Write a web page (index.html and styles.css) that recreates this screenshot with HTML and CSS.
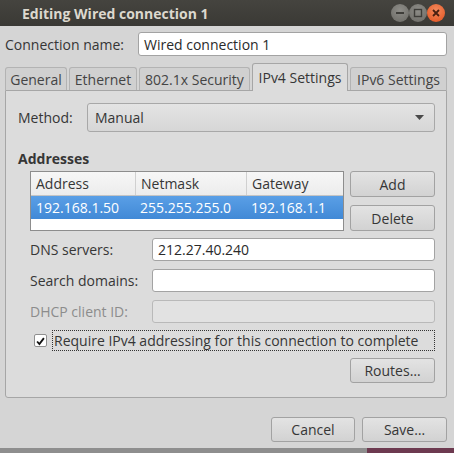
FILE: index.html
```html
<!DOCTYPE html>
<html lang="en">
<head>
  <meta charset="UTF-8" />
  <title>Editing Wired connection 1</title>
  <link rel="stylesheet" href="styles.css">
</head>
<body>
  <div class="window">
    <header class="titlebar">
      <span class="title">Editing Wired connection 1</span>
      <div class="wm-buttons">
        <span class="wm-btn wm-min"><svg width="18" height="18" viewBox="0 0 18 18"><rect x="5" y="8" width="8" height="2" fill="#3e3d39"/></svg></span>
        <span class="wm-btn wm-max"><svg width="18" height="18" viewBox="0 0 18 18"><rect x="5.5" y="5.5" width="7" height="7" fill="none" stroke="#3e3d39" stroke-width="1.4"/></svg></span>
        <span class="wm-btn wm-close"><svg width="18" height="18" viewBox="0 0 18 18"><path d="M6 6 L12 12 M12 6 L6 12" stroke="#4a1f10" stroke-width="1.8"/></svg></span>
      </div>
    </header>

    <div class="content">
      <div class="name-row">
        <label class="name-label">Connection name:</label>
        <div class="entry">Wired connection 1</div>
      </div>

      <!-- notebook tabs -->
      <div class="tabs">
        <div class="tab tab-general">General</div>
        <div class="tab tab-ethernet">Ethernet</div>
        <div class="tab tab-security">802.1x Security</div>
        <div class="tab tab-ipv4 active">IPv4 Settings</div>
        <div class="tab tab-ipv6">IPv6 Settings</div>
      </div>

      <div class="panel">
        <div class="method-row">
          <span class="method-label">Method:</span>
          <div class="combo">
            <span>Manual</span>
            <svg width="9" height="5" viewBox="0 0 9 5"><path d="M0 0 H9 L4.5 5 Z" fill="#4a4a4a"/></svg>
          </div>
        </div>

        <h4 class="section-title">Addresses</h4>

        <div class="addresses">
          <div class="table">
            <div class="t-row t-head">
              <span class="col col-addr">Address</span>
              <span class="col col-mask">Netmask</span>
              <span class="col col-gw">Gateway</span>
            </div>
            <div class="t-row t-selected">
              <span class="col col-addr">192.168.1.50</span>
              <span class="col col-mask">255.255.255.0</span>
              <span class="col col-gw">192.168.1.1</span>
            </div>
          </div>
          <div class="side-buttons">
            <button class="btn">Add</button>
            <button class="btn">Delete</button>
          </div>
        </div>

        <div class="fields">
          <div class="field">
            <span class="field-label">DNS servers:</span>
            <div class="entry">212.27.40.240</div>
          </div>
          <div class="field">
            <span class="field-label">Search domains:</span>
            <div class="entry"></div>
          </div>
          <div class="field disabled">
            <span class="field-label">DHCP client ID:</span>
            <div class="entry"></div>
          </div>
        </div>

        <div class="check-row">
          <span class="checkbox"><svg width="13" height="13" viewBox="0 0 13 13"><path d="M2.5 6.5 L5.2 9.5 L10.5 2.5" fill="none" stroke="#111" stroke-width="2.2"/></svg></span>
          <span class="check-label">Require IPv4 addressing for this connection to complete</span>
        </div>

        <div class="routes-row">
          <button class="btn">Routes…</button>
        </div>
      </div>

      <div class="actions">
        <button class="btn btn-cancel">Cancel</button>
        <button class="btn btn-save">Save…</button>
      </div>
    </div>
  </div>
  <div class="desktop">
    <div class="desktop-grey"></div>
    <div class="desktop-wall"></div>
  </div>
</body>
</html>
```

FILE: styles.css
```css
:root {
  --text: #363636;
  --bg: #d5d5d5;
  --panel: #dcdcdc;
  --border: #a6a6a6;
  --select: #4d94de;
}

* {
  box-sizing: border-box;
  margin: 0;
  padding: 0;
}

body {
  width: 454px;
  height: 453px;
  overflow: hidden;
  font-family: "Open Sans", sans-serif;
  font-size: 14px;
  color: var(--text);
  background: #8a8a8a;
}

.window {
  height: 448px;
  background: var(--bg);
  display: flex;
  flex-direction: column;
}

/* title bar */
.titlebar {
  height: 26px;
  background: linear-gradient(#45443f, #3a3935);
  display: flex;
  align-items: center;
  padding: 0 9px 0 22px;
}

.title {
  flex: 1;
  color: #dcd8ce;
  font-weight: bold;
  font-size: 14px;
}

.wm-buttons {
  display: flex;
}

.wm-btn {
  width: 18px;
  height: 18px;
  border-radius: 50%;
  display: flex;
  background: radial-gradient(circle at 50% 35%, #8e8d88, #6a6964);
}

.wm-close {
  background: radial-gradient(circle at 50% 35%, #f48a5c, #e0501e);
}

.content {
  flex: 1;
  padding: 6px 7px 0 5px;
  display: flex;
  flex-direction: column;
}

.name-row {
  display: flex;
  align-items: center;
}

.name-label {
  width: 133px;
}

.entry {
  flex: 1;
  height: 24px;
  background: #fff;
  border: 1px solid #a3a3a3;
  border-radius: 3px;
  padding: 0 5px;
  display: flex;
  align-items: center;
  color: #2a2a2a;
}

/* tabs */
.tabs {
  margin-top: 7px;
  height: 27px;
  display: flex;
  align-items: flex-end;
  gap: 2px;
  position: relative;
  z-index: 1;
}

.tab {
  height: 23px;
  border: 1px solid #b3b3b3;
  border-bottom: none;
  border-radius: 3px 3px 0 0;
  background: #d0d0d0;
  display: flex;
  align-items: center;
  justify-content: center;
  color: #444;
  white-space: nowrap;
}

.tab.active {
  height: 28px;
  margin-bottom: -1px;
  background: var(--panel);
  border-color: var(--border);
  color: var(--text);
}

.tab-general { width: 62px; }
.tab-ethernet { width: 68px; }
.tab-security { width: 111px; }
.tab-ipv4 { width: 96px; }
.tab-ipv6 { width: 97px; }

.panel {
  height: 308px;
  background: var(--panel);
  border: 1px solid var(--border);
  border-radius: 0 0 3px 3px;
  padding: 12px 11px 0 12px;
  display: flex;
  flex-direction: column;
}

.method-row {
  display: flex;
  align-items: center;
}

.method-label {
  width: 69px;
}

.combo {
  flex: 1;
  height: 29px;
  border: 1px solid #a8a8a8;
  border-radius: 3px;
  background: linear-gradient(#e4e4e4, #d6d6d6);
  display: flex;
  align-items: center;
  justify-content: space-between;
  padding: 0 10px 0 7px;
}

.section-title {
  margin-top: 17px;
  height: 19px;
  font-size: 14px;
  font-weight: bold;
}

.addresses {
  margin-top: 3px;
  padding-left: 12px;
  display: flex;
  gap: 6px;
}

.table {
  width: 314px;
  height: 60px;
  background: #fff;
  border: 1px solid #8d8d8d;
}

.t-row {
  display: flex;
  align-items: center;
}

.t-head {
  height: 24px;
  background: linear-gradient(#f7f7f7, #ececec);
  border-bottom: 1px solid #c4c4c4;
}

.t-head .col + .col {
  border-left: 1px solid #d0d0d0;
}

.t-selected {
  height: 23px;
  background: linear-gradient(#5a9fe6, #4189d6);
  color: #fff;
}

.col {
  height: 100%;
  display: flex;
  align-items: center;
  padding-left: 5px;
}

.col-addr { width: 104px; }
.col-mask { width: 111px; }
.col-gw { flex: 1; }

.side-buttons {
  display: flex;
  flex-direction: column;
  gap: 8px;
}

.btn {
  width: 85px;
  height: 26px;
  font: inherit;
  color: var(--text);
  border: 1px solid #a2a2a2;
  border-radius: 3px;
  background: linear-gradient(#e3e3e3, #d2d2d2);
}

.fields {
  margin-top: 7px;
  padding-left: 12px;
  display: flex;
  flex-direction: column;
  gap: 8px;
}

.field {
  display: flex;
  align-items: center;
}

.field-label {
  width: 122px;
}

.field .entry {
  height: 23px;
}

.field.disabled .field-label {
  color: #8c8c8c;
}

.field.disabled .entry {
  background: #e2e2e2;
  border-color: #b9b9b9;
}

.check-row {
  margin-top: 7px;
  padding-left: 16px;
  height: 21px;
  display: flex;
  align-items: center;
  gap: 5px;
}

.checkbox {
  width: 13px;
  height: 13px;
  background: #fff;
  border: 1px solid #8f8f8f;
  border-radius: 2px;
  display: flex;
}

.check-label {
  flex: 1;
  height: 21px;
  border: 1px dotted #333;
  display: flex;
  align-items: center;
  padding-left: 1px;
  white-space: nowrap;
}

.routes-row {
  margin-top: 7px;
  display: flex;
  justify-content: flex-end;
}

.routes-row .btn {
  height: 25px;
}

.actions {
  margin-top: 19px;
  display: flex;
  justify-content: flex-end;
  gap: 7px;
}

.actions .btn {
  height: 25px;
}

.btn-cancel { width: 84px; }

.desktop {
  height: 5px;
  display: flex;
}

.desktop-grey {
  width: 367px;
  background: #8e8e8e;
}

.desktop-wall {
  flex: 1;
  background: #6d3a50;
}
```
